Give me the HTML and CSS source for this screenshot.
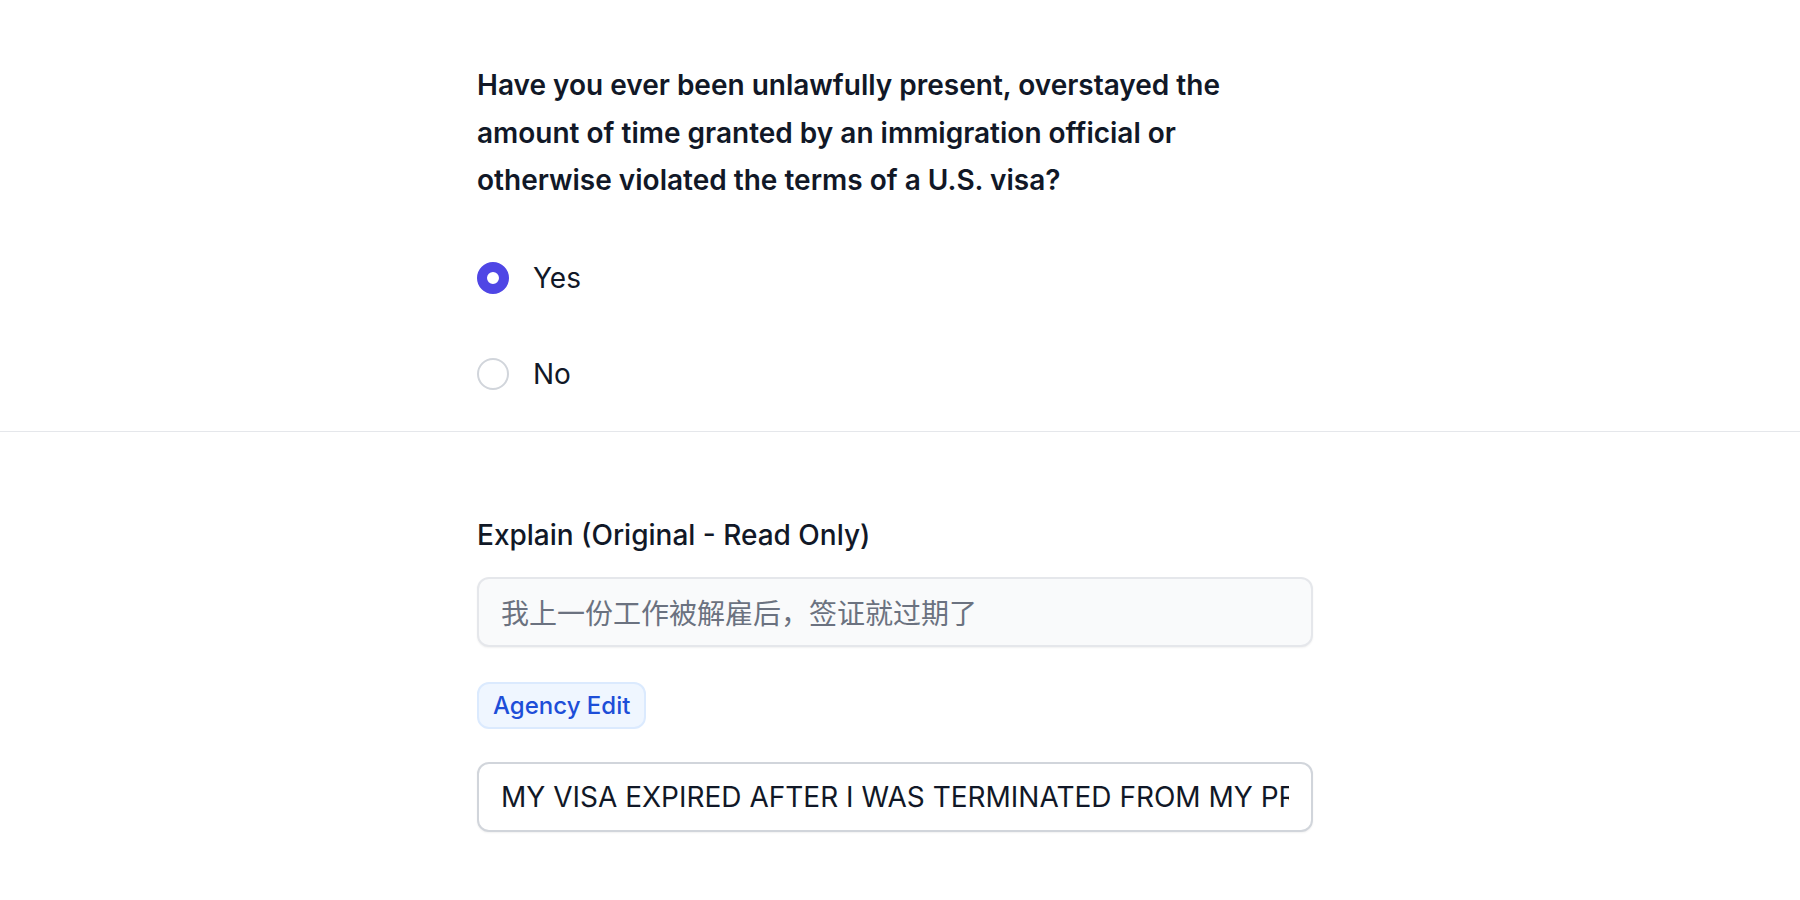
FILE: index.html
```html
<!DOCTYPE html>
<html lang="en">
<head>
<meta charset="utf-8">
<title>Visa question</title>
<link rel="stylesheet" href="styles.css">
</head>
<body>
<section class="block block-question">
  <div class="container">
    <p class="question">Have you ever been unlawfully present, overstayed the amount of time granted by an immigration official or otherwise violated the terms of a U.S. visa?</p>
    <div class="options">
      <label class="option">
        <input class="radio" type="radio" name="overstay" checked>
        <span class="option-text">Yes</span>
      </label>
      <label class="option">
        <input class="radio" type="radio" name="overstay">
        <span class="option-text">No</span>
      </label>
    </div>
  </div>
</section>
<section class="block block-explain">
  <div class="container">
    <label class="field-label" for="orig">Explain (Original - Read Only)</label>
    <input id="orig" class="field field-readonly" type="text" readonly value="我上一份工作被解雇后，签证就过期了">
    <div class="badge-row"><span class="badge">Agency Edit</span></div>
    <input class="field field-edit" type="text" value="MY VISA EXPIRED AFTER I WAS TERMINATED FROM MY PREVIOUS EMPLOYER">
  </div>
</section>
</body>
</html>
```
FILE: styles.css
```css
* { box-sizing: border-box; }
html, body { margin: 0; padding: 0; background: #ffffff; }
body {
  font-family: Inter, "Noto Sans CJK SC", "Liberation Sans", sans-serif;
  color: #111827;
  font-size: 28px;
}
.block { padding-right: 10px; }
.container { width: 836px; margin: 0 auto; }
.block-question {
  padding-top: 62px;
  padding-bottom: 33px;
  border-bottom: 1px solid #e5e7eb;
}
.question {
  margin: 0;
  font-weight: 600;
  font-size: 28px;
  line-height: 47.5px;
  color: #111827;
}
.options {
  margin-top: 49.5px;
  display: flex;
  flex-direction: column;
  gap: 48px;
}
.option {
  display: flex;
  align-items: center;
  gap: 24px;
  height: 48px;
  cursor: pointer;
}
.radio {
  appearance: none;
  -webkit-appearance: none;
  margin: 0;
  width: 32px;
  height: 32px;
  border-radius: 50%;
  border: 2px solid #d1d5db;
  background: #ffffff;
  flex: none;
}
.radio:checked {
  border: 10px solid #4f46e5;
  background: #ffffff;
}
.option-text { font-size: 28px; line-height: 40px; color: #111827; }
.block-explain { padding-top: 83px; padding-bottom: 60px; }
.field-label {
  display: block;
  font-size: 28px;
  line-height: 40px;
  font-weight: 500;
  color: #111827;
}
.field {
  display: block;
  width: 100%;
  height: 70px;
  padding: 0 22px;
  border-radius: 12px;
  font-family: Inter, "Noto Sans CJK SC", "Liberation Sans", sans-serif;
  font-size: 28px;
  outline: none;
}
.field-readonly {
  margin-top: 22px;
  background: #f9fafb;
  border: 2px solid #e5e7eb;
  color: #6b7280;
  box-shadow: 0 1px 2px rgba(0,0,0,0.06);
}
.badge-row { margin-top: 35px; display: flex; }
.badge {
  display: inline-flex;
  align-items: center;
  height: 47px;
  padding: 0 14px;
  border: 2px solid #dbeafe;
  background: #eff6ff;
  color: #1d4ed8;
  border-radius: 12px;
  font-size: 24px;
  font-weight: 500;
}
.field-edit {
  margin-top: 33px;
  background: #ffffff;
  border: 2px solid #d1d5db;
  color: #111827;
  box-shadow: 0 1px 2px rgba(0,0,0,0.06);
}
```
